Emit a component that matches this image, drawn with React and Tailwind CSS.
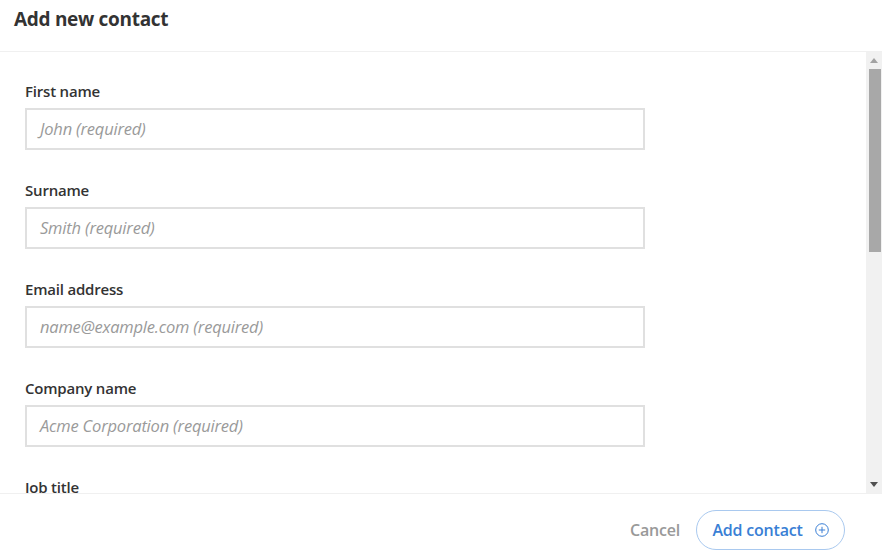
import React from "react";

const fields = [
  { label: "First name", ph: "John (required)" },
  { label: "Surname", ph: "Smith (required)" },
  { label: "Email address", ph: "name@example.com (required)" },
  { label: "Company name", ph: "Acme Corporation (required)" },
  { label: "Job title", ph: "Manager" },
];

export default function App() {
  return (
    <div
      className="w-[882px] h-[558px] bg-white flex flex-col overflow-hidden text-[#333]"
      style={{ fontFamily: '"Open Sans", "Noto Sans", sans-serif' }}
    >
      <div className="h-[52px] shrink-0 border-b border-[#f0f0f0] flex items-start px-[14px] pt-[8px]">
        <h1 className="text-[19px] font-bold text-[#333] tracking-[-0.3px] leading-[22px]">Add new contact</h1>
      </div>
      <div className="flex-1 flex min-h-0">
        <div className="flex-1 overflow-hidden pl-[25px] pt-[29px]">
          {fields.map((f) => (
            <div key={f.label} className="mb-[30px]">
              <div className="text-[15px] font-semibold leading-[20px] text-[#333] mb-[7px] tracking-[-0.2px]">{f.label}</div>
              <div className="w-[620px] h-[42px] border-2 border-[#e0e0e0] flex items-center px-[13px]">
                <span className="italic text-[16.5px] text-[#9a9a9a] tracking-[-0.2px]">{f.ph}</span>
              </div>
            </div>
          ))}
        </div>
        <div className="w-[16px] shrink-0 bg-[#f1f1f1] flex flex-col items-center">
          <div className="h-[17px] w-full flex items-center justify-center">
            <svg width="8" height="5" viewBox="0 0 8 5"><path d="M0 5 L4 0 L8 5 Z" fill="#a3a3a3" /></svg>
          </div>
          <div className="w-[12px] ml-[2px] h-[183px] bg-[#a8a8a8]" />
          <div className="flex-1" />
          <div className="h-[17px] w-full flex items-center justify-center">
            <svg width="8" height="5" viewBox="0 0 8 5"><path d="M0 0 L8 0 L4 5 Z" fill="#505050" /></svg>
          </div>
        </div>
      </div>
      <div className="h-[65px] shrink-0 border-t border-[#f0f0f0] flex items-center justify-end pr-[37px] pt-[8px] gap-[16px]">
        <button className="text-[16px] font-semibold text-[#999] tracking-[-0.2px]">Cancel</button>
        <button className="h-[40px] w-[149px] rounded-full border border-[#a9c9ef] flex items-center justify-center gap-[12px] text-[16px] font-semibold text-[#3a7fd5] tracking-[-0.2px]">
          <span>Add contact</span>
          <svg width="14" height="14" viewBox="0 0 14 14" fill="none" stroke="#3a7fd5" strokeWidth="1">
            <circle cx="7" cy="7" r="6.3" />
            <path d="M7 3.8 V10.2 M3.8 7 H10.2" />
          </svg>
        </button>
      </div>
    </div>
  );
}
